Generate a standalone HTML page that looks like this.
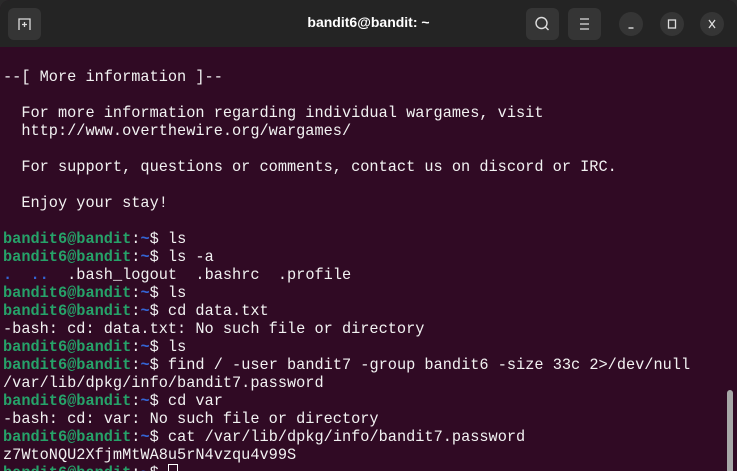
<!DOCTYPE html>
<html><head><style>
html,body{margin:0;padding:0;width:737px;height:471px;overflow:hidden;background:#2a2a2a;}
.win{position:absolute;left:0;top:0;width:737px;height:471px;background:#300a24;border-radius:10px 10px 0 0;overflow:hidden;}
.tb{position:absolute;left:0;top:0;width:737px;height:47px;background:#242424;}
.title{position:absolute;left:0;width:737px;top:14px;text-align:center;color:#fff;font:bold 14px "Liberation Sans",sans-serif;}
.btn{position:absolute;top:8px;width:33px;height:32px;background:#353535;border-radius:6px;}
.cir{position:absolute;top:12px;width:24px;height:24px;border-radius:50%;background:#353535;}
pre{position:absolute;left:3px;top:68px;margin:0;font:15.27px/18px "Liberation Mono",monospace;color:#f2f2f2;}
.g{color:#26a269;font-weight:bold}.b{color:#3465d4;font-weight:bold}
.cur{display:inline-block;width:8px;height:13px;border:1px solid #fff;vertical-align:-2px}
.sb{position:absolute;left:727px;top:390px;width:6px;height:90px;background:#a8a8a8;border-radius:3px;}
</style></head><body>
<div class="win">
<div class="tb">
<div class="btn" style="left:8px"><svg width="33" height="32"><path d="M11 22V11h11v11M14 16.5h5M16.5 14v5" stroke="#ddd" stroke-width="1.3" fill="none"/></svg></div>
<div class="title">bandit6@bandit: ~</div>
<div class="btn" style="left:526px"><svg width="33" height="32"><circle cx="15.5" cy="15" r="5.5" stroke="#ddd" stroke-width="1.4" fill="none"/><path d="M19.5 19l3 3" stroke="#ddd" stroke-width="1.4"/></svg></div>
<div class="btn" style="left:568px"><svg width="33" height="32"><path d="M12 11h9M12 16h9M12 21h9" stroke="#ddd" stroke-width="1.3"/></svg></div>
<div class="cir" style="left:619px"><svg width="24" height="24"><path d="M9.5 16h5" stroke="#ddd" stroke-width="1.4"/></svg></div>
<div class="cir" style="left:660px"><svg width="24" height="24"><rect x="8.5" y="8" width="7" height="8" stroke="#ddd" stroke-width="1.3" fill="none"/></svg></div>
<div class="cir" style="left:700px"><svg width="24" height="24"><path d="M9 8l6 8M15 8l-6 8" stroke="#ddd" stroke-width="1.3"/></svg></div>
</div>
<pre>--[ More information ]--

  For more information regarding individual wargames, visit
  http://www.overthewire.org/wargames/

  For support, questions or comments, contact us on discord or IRC.

  Enjoy your stay!

<span class="g">bandit6@bandit</span>:<span class="b">~</span>$ ls
<span class="g">bandit6@bandit</span>:<span class="b">~</span>$ ls -a
<span class="b">.</span>  <span class="b">..</span>  .bash_logout  .bashrc  .profile
<span class="g">bandit6@bandit</span>:<span class="b">~</span>$ ls
<span class="g">bandit6@bandit</span>:<span class="b">~</span>$ cd data.txt
-bash: cd: data.txt: No such file or directory
<span class="g">bandit6@bandit</span>:<span class="b">~</span>$ ls
<span class="g">bandit6@bandit</span>:<span class="b">~</span>$ find / -user bandit7 -group bandit6 -size 33c 2&gt;/dev/null
/var/lib/dpkg/info/bandit7.password
<span class="g">bandit6@bandit</span>:<span class="b">~</span>$ cd var
-bash: cd: var: No such file or directory
<span class="g">bandit6@bandit</span>:<span class="b">~</span>$ cat /var/lib/dpkg/info/bandit7.password
z7WtoNQU2XfjmMtWA8u5rN4vzqu4v99S
<span class="g">bandit6@bandit</span>:<span class="b">~</span>$ <span class="cur"></span></pre>
<div class="sb"></div>
</div>
</body></html>
